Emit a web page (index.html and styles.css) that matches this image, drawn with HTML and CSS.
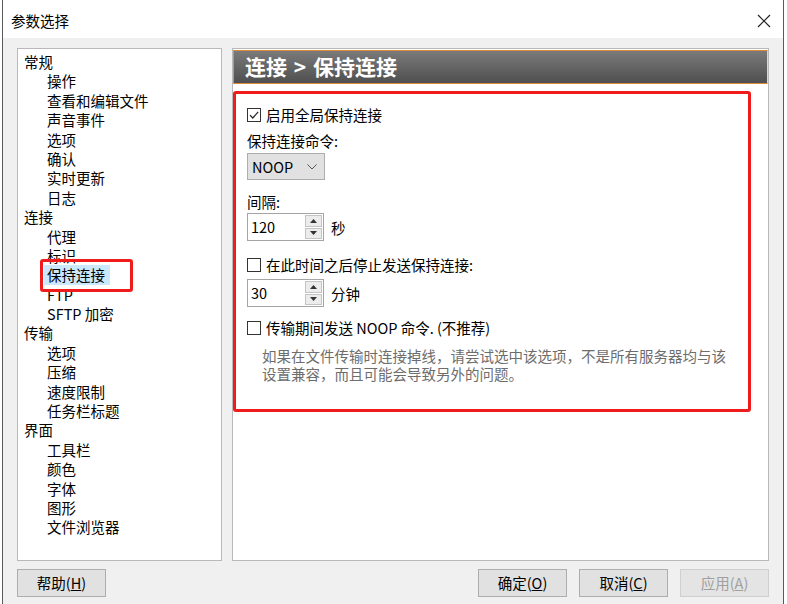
FILE: index.html
```html
<!DOCTYPE html>
<html lang="zh-CN">
<head>
<meta charset="utf-8">
<title>参数选择</title>
<link rel="stylesheet" href="styles.css">
</head>
<body>
<div class="window">
  <div class="titlebar">
    <span class="title">参数选择</span>
    <svg class="close" width="14" height="14" viewBox="0 0 14 14"><path d="M1 1 L13 13 M13 1 L1 13" stroke="#222" stroke-width="1.2" fill="none"/></svg>
  </div>
  <div class="client">
    <div class="panes">
      <div class="tree">
        <div class="node">常规</div>
        <div class="node child">操作</div>
        <div class="node child">查看和编辑文件</div>
        <div class="node child">声音事件</div>
        <div class="node child">选项</div>
        <div class="node child">确认</div>
        <div class="node child">实时更新</div>
        <div class="node child">日志</div>
        <div class="node">连接</div>
        <div class="node child">代理</div>
        <div class="node child">标识</div>
        <div class="node child"><span class="sel">保持连接</span></div>
        <div class="node child">FTP</div>
        <div class="node child">SFTP 加密</div>
        <div class="node">传输</div>
        <div class="node child">选项</div>
        <div class="node child">压缩</div>
        <div class="node child">速度限制</div>
        <div class="node child">任务栏标题</div>
        <div class="node">界面</div>
        <div class="node child">工具栏</div>
        <div class="node child">颜色</div>
        <div class="node child">字体</div>
        <div class="node child">图形</div>
        <div class="node child">文件浏览器</div>
        <div class="mark-sel"></div>
      </div>
      <div class="page">
        <div class="page-head">连接 <span class="gt">&gt;</span> 保持连接</div>
        <div class="page-body">
          <div class="check-row r1">
            <span class="box"><svg width="12" height="12" viewBox="0 0 12 12"><path d="M2 6.2 L4.8 9 L10.2 2.8" stroke="#222" stroke-width="1.2" fill="none"/></svg></span>
            <span>启用全局保持连接</span>
          </div>
          <div class="label r2">保持连接命令:</div>
          <div class="combo">
            <span>NOOP</span>
            <svg width="10" height="6" viewBox="0 0 10 6"><path d="M0.5 0.5 L5 5 L9.5 0.5" stroke="#555" stroke-width="1" fill="none"/></svg>
          </div>
          <div class="label r3">间隔:</div>
          <div class="spin r4">
            <div class="spin-box">
              <span class="spin-val">120</span>
              <span class="spin-btns">
                <span class="sb"><svg width="7" height="4" viewBox="0 0 7 4"><path d="M0 4 L3.5 0 L7 4 Z" fill="#333"/></svg></span>
                <span class="sb"><svg width="7" height="4" viewBox="0 0 7 4"><path d="M0 0 L3.5 4 L7 0 Z" fill="#333"/></svg></span>
              </span>
            </div>
            <span>秒</span>
          </div>
          <div class="check-row r5">
            <span class="box"></span>
            <span>在此时间之后停止发送保持连接:</span>
          </div>
          <div class="spin r6">
            <div class="spin-box">
              <span class="spin-val">30</span>
              <span class="spin-btns">
                <span class="sb"><svg width="7" height="4" viewBox="0 0 7 4"><path d="M0 4 L3.5 0 L7 4 Z" fill="#333"/></svg></span>
                <span class="sb"><svg width="7" height="4" viewBox="0 0 7 4"><path d="M0 0 L3.5 4 L7 0 Z" fill="#333"/></svg></span>
              </span>
            </div>
            <span>分钟</span>
          </div>
          <div class="check-row r7">
            <span class="box"></span>
            <span>传输期间发送 NOOP 命令. (不推荐)</span>
          </div>
          <p class="hint">如果在文件传输时连接掉线，请尝试选中该选项，不是所有服务器均与该设置兼容，而且可能会导致另外的问题。</p>
        </div>
        <div class="mark-page"></div>
      </div>
    </div>
    <div class="buttons">
      <div class="btn">帮助(<u>H</u>)</div>
      <div class="btn-group">
        <div class="btn">确定(<u>O</u>)</div>
        <div class="btn">取消(<u>C</u>)</div>
        <div class="btn disabled">应用(<u>A</u>)</div>
      </div>
    </div>
  </div>
</div>
</body>
</html>
```

FILE: styles.css
```css
html, body {
  margin: 0;
  padding: 0;
  background: #ffffff;
}
body {
  width: 787px;
  height: 604px;
  overflow: hidden;
  font-family: "Noto Sans CJK SC", "Noto Sans", sans-serif;
  font-size: 14.5px;
  color: #000;
}
.window {
  box-sizing: border-box;
  margin-left: 2px;
  width: 782px;
  height: 604px;
  border-left: 1px solid #5a5a5a;
  border-right: 1px solid #5a5a5a;
  background: #fff;
  display: flex;
  flex-direction: column;
}
.titlebar {
  height: 38px;
  box-sizing: border-box;
  padding: 4px 12px 0 8px;
  display: flex;
  align-items: center;
  justify-content: space-between;
  background: #fff;
}
.title {
  line-height: 20px;
}
.client {
  flex: 1;
  background: #f0f0f0;
  padding: 10px 14px 0 14px;
}
.panes {
  display: grid;
  grid-template-columns: 205px 537px;
  column-gap: 10px;
  height: 513px;
}
.tree {
  position: relative;
  box-sizing: border-box;
  background: #fff;
  border: 1px solid #b9b9b9;
  padding: 3px 0 0 6px;
}
.node {
  line-height: 19.4px;
  height: 19.4px;
  white-space: nowrap;
}
.node.child {
  padding-left: 23px;
}
.sel {
  display: inline-block;
  background: #cce8ff;
  padding: 0 5px 0 3px;
  margin-left: -3px;
}
.mark-sel {
  position: absolute;
  left: 22px;
  top: 210px;
  width: 93px;
  height: 33px;
  box-sizing: border-box;
  border: 3px solid #f01c1c;
  border-radius: 3px;
}
.page {
  position: relative;
  box-sizing: border-box;
  background: #fff;
  border: 1px solid #b9b9b9;
  padding-top: 1px;
}
.page-head {
  height: 34px;
  box-sizing: border-box;
  border: 1px solid #d98c3a;
  border-right-color: #d8d8d8;
  background: linear-gradient(#7a7a7a, #4f4f4f);
  color: #fff;
  font-weight: bold;
  font-size: 21px;
  line-height: 31px;
  padding-left: 11px;
  white-space: pre;
}
.gt {
  padding: 0 2px;
}
.page-body {
  padding: 21px 0 0 14px;
}
.check-row {
  display: flex;
  align-items: center;
  gap: 5px;
  height: 20px;
  line-height: 20px;
}
.box {
  width: 14px;
  height: 14px;
  box-sizing: border-box;
  border: 1px solid #333;
  background: #fff;
  display: flex;
  align-items: center;
  justify-content: center;
}
.label {
  line-height: 20px;
  height: 20px;
}
.r2 { margin-top: 6px; }
.combo {
  margin-top: 2px;
  width: 78px;
  height: 27px;
  box-sizing: border-box;
  border: 1px solid #adadad;
  background: #e1e1e1;
  display: flex;
  align-items: center;
  justify-content: space-between;
  padding: 0 7px 0 4px;
}
.r3 { margin-top: 12px; }
.spin {
  display: flex;
  align-items: center;
  gap: 7px;
}
.r4 { margin-top: 1px; }
.spin-box {
  width: 77px;
  height: 28px;
  box-sizing: border-box;
  border: 1px solid #a5a5a5;
  background: #fff;
  display: flex;
}
.spin-val {
  flex: 1;
  padding-left: 3px;
  line-height: 26px;
}
.spin-btns {
  width: 17px;
  display: flex;
  flex-direction: column;
  gap: 1px;
  padding: 1px 1px 1px 0;
}
.sb {
  flex: 1;
  box-sizing: border-box;
  border: 1px solid #c4c4c4;
  background: #ececec;
  display: flex;
  align-items: center;
  justify-content: center;
}
.r5 { margin-top: 14px; }
.r6 { margin-top: 4px; }
.r7 { margin-top: 11px; }
.hint {
  margin: 9px 0 0 15px;
  width: 470px;
  color: #6d6d6d;
  line-height: 18px;
}
.mark-page {
  position: absolute;
  left: 0;
  top: 42px;
  width: 518px;
  height: 321px;
  box-sizing: border-box;
  border: 3px solid #f01c1c;
  border-radius: 3px;
}
.buttons {
  margin-top: 8px;
  display: flex;
  justify-content: space-between;
}
.btn-group {
  display: flex;
  gap: 12px;
}
.btn {
  width: 89px;
  height: 28px;
  box-sizing: border-box;
  border: 1px solid #adadad;
  background: #e1e1e1;
  display: flex;
  align-items: center;
  justify-content: center;
  line-height: 20px;
}
.btn.disabled {
  color: #a0a0a0;
  border-color: #cfcfcf;
  background: #e4e4e4;
}
```
